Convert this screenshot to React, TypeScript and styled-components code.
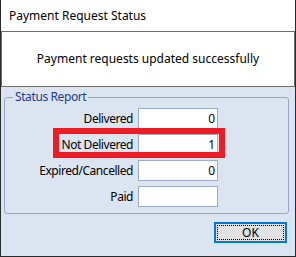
import React from "react";
import styled, { createGlobalStyle } from "styled-components";

const Global = createGlobalStyle`
  html, body { margin: 0; padding: 0; background: #ffffff; }
  body { font-family: "Noto Sans", "Segoe UI", Arial, sans-serif; font-size: 12px; color: #000; }
`;

const Window = styled.div`
  width: 296px;
  height: 257px;
  box-sizing: border-box;
  border: 1px solid #2a2a2a;
  border-top: none;
  display: flex;
  flex-direction: column;
  background: #dbe5f1;
`;

const TitleBar = styled.div`
  height: 31px;
  background: #ffffff;
  padding-left: 8px;
  display: flex;
  align-items: center;
  font-size: 12px;
`;

const Message = styled.div`
  height: 56px;
  box-sizing: border-box;
  border: 1px solid #6f6f6f;
  background: #ffffff;
  display: flex;
  align-items: center;
  justify-content: center;
  font-size: 12px;
  padding-bottom: 1px;
`;

const Body = styled.div`
  flex: 1;
  display: flex;
  flex-direction: column;
  padding: 2px 6px 0 3px;
`;

const Group = styled.fieldset`
  margin: 0;
  padding: 3px 0 6px 0;
  border: 1px solid #93a7c9;
  border-radius: 3px;
  min-width: 0;
`;

const Legend = styled.legend`
  margin-left: 8px;
  padding: 0 2px;
  color: #1e3b8a;
  font-size: 12px;
  line-height: 16px;
  letter-spacing: -0.4px;
`;

const Rows = styled.div`
  position: relative;
  display: grid;
  grid-template-columns: 128px 80px;
  column-gap: 5px;
  row-gap: 5px;
  align-items: center;
`;

const Label = styled.label`
  text-align: right;
  font-size: 12px;
  letter-spacing: -0.45px;
`;

const Field = styled.div`
  height: 21px;
  box-sizing: border-box;
  border: 1px solid #9aabc8;
  background: #ffffff;
  text-align: right;
  padding-right: 2px;
  line-height: 19px;
  font-size: 12px;
`;

const Highlight = styled.div`
  position: absolute;
  left: 48px;
  top: 20px;
  width: 172px;
  height: 30px;
  box-sizing: border-box;
  border: 6px solid #ed1c24;
  pointer-events: none;
`;

const Footer = styled.div`
  display: flex;
  justify-content: flex-end;
  padding-top: 8px;
  padding-right: 2px;
`;

const Button = styled.button`
  width: 73px;
  height: 21px;
  box-sizing: border-box;
  border: 2px solid #0078d7;
  background: #e1e1e1;
  padding: 0;
  font-family: inherit;
  font-size: 12px;
  color: #000;
  position: relative;
  &::after {
    content: "";
    position: absolute;
    inset: 1px;
    border: 1px dotted #000;
  }
`;

const rows: { label: string; value: string }[] = [
  { label: "Delivered", value: "0" },
  { label: "Not Delivered", value: "1" },
  { label: "Expired/Cancelled", value: "0" },
  { label: "Paid", value: "" },
];

export default function App() {
  return (
    <>
      <Global />
      <Window>
        <TitleBar>Payment Request Status</TitleBar>
        <Message>Payment requests updated successfully</Message>
        <Body>
          <Group>
            <Legend>Status Report</Legend>
            <Rows>
              {rows.map((r) => (
                <React.Fragment key={r.label}>
                  <Label>{r.label}</Label>
                  <Field>{r.value}</Field>
                </React.Fragment>
              ))}
              <Highlight />
            </Rows>
          </Group>
          <Footer>
            <Button>OK</Button>
          </Footer>
        </Body>
      </Window>
    </>
  );
}
